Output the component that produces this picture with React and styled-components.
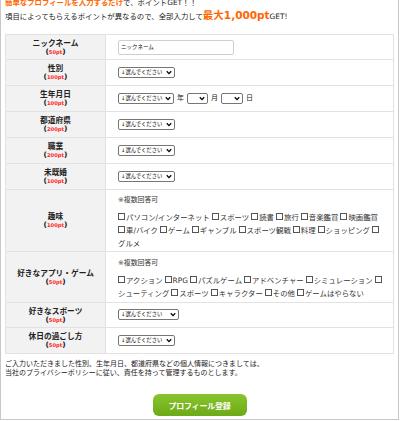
import React from 'react';
import styled, { createGlobalStyle } from 'styled-components';

const GlobalStyle = createGlobalStyle`
  html, body {
    margin: 0;
    padding: 0;
    background: #fff;
  }
  body {
    font-family: "DejaVu Sans", "Noto Sans CJK JP", sans-serif;
    color: #333;
  }
`;

const Frame = styled.div`
  box-sizing: border-box;
  width: 399px;
  height: 420px;
  padding: 0 4px;
  border: 1px solid #c8c8c8;
  border-top: none;
  overflow: hidden;
`;

const Lead = styled.p`
  margin: -4px 0 0;
  font-size: 7.4px;
  line-height: 13px;
  color: #222;
`;

const Accent = styled.span`
  color: #ff6600;
  font-weight: bold;
  font-size: ${props => (props.$big ? '10.5px' : 'inherit')};
`;

const Table = styled.table`
  width: 100%;
  margin-top: 11px;
  border-collapse: collapse;
  border: 1px solid #e2e2e2;
`;

const Row = styled.tr`
  height: ${props => props.$h}px;
`;

const Head = styled.th`
  width: 99px;
  padding: 0;
  background: #f2f2f2;
  border: 1px solid #e2e2e2;
  text-align: center;
  vertical-align: middle;
  color: #222;
`;

const Label = styled.div`
  font-size: 7.7px;
  line-height: 9px;
`;

const Points = styled.div`
  font-size: 7.4px;
  line-height: 8px;
`;

const PtNum = styled.span`
  color: #ff1a1a;
  font-size: 5.2px;
`;

const Cell = styled.td`
  padding: ${props => (props.$multi ? '3px 6px 1px 12px' : '0 6px 0 12px')};
  border: 1px solid #e2e2e2;
  vertical-align: middle;
  font-size: 7px;
  line-height: 13px;
  color: #222;
`;

const TextInput = styled.input`
  box-sizing: border-box;
  width: 116px;
  height: 15px;
  padding: 0 2px;
  border: 1px solid #cfcfcf;
  border-radius: 2px;
  font-family: "DejaVu Sans", "Noto Sans CJK JP", sans-serif;
  font-size: 5.5px;
  color: #111;
  vertical-align: middle;
`;

const SelectWrap = styled.span`
  position: relative;
  display: inline-block;
  vertical-align: middle;
  line-height: 0;
`;

const Select = styled.select`
  appearance: none;
  box-sizing: border-box;
  width: ${props => props.$w}px;
  height: 11px;
  margin: 0;
  padding: 0 0 0 2px;
  border: 1px solid #767676;
  border-radius: 2px;
  background: #fff;
  font-family: "DejaVu Sans", "Noto Sans CJK JP", sans-serif;
  font-size: 5.3px;
  line-height: 9px;
  color: #000;
`;

const Chevron = styled.svg`
  position: absolute;
  right: 3px;
  top: 3px;
  width: 6px;
  height: 5px;
  pointer-events: none;
`;

const Unit = styled.span`
  margin: 0 3px;
  font-size: 7px;
  vertical-align: middle;
`;

const Note = styled.div`
  margin-bottom: 4px;
  font-size: 6.9px;
  line-height: 13px;
  color: #333;
`;

const Choices = styled.div`
  font-size: 7.4px;
  line-height: 13px;
  color: #333;
`;

const CheckBox = styled.input.attrs({ type: 'checkbox' })`
  appearance: none;
  box-sizing: border-box;
  display: inline-block;
  width: 7px;
  height: 7px;
  margin: 0 1px 0 0;
  border: 1px solid #555;
  background: #fff;
  vertical-align: -0.5px;
`;

const Choice = styled.span`
  white-space: nowrap;
  margin-right: 2px;
`;

const Notice = styled.p`
  margin: 6px 0 0;
  font-size: 7px;
  line-height: 9px;
  color: #222;
`;

const Submit = styled.button`
  display: block;
  width: 94px;
  height: 22px;
  margin: 16px auto 0;
  padding: 0;
  border: none;
  border-radius: 6px;
  background: linear-gradient(#88c52c, #6da918);
  color: #fff;
  font-family: "Noto Sans CJK JP", sans-serif;
  font-size: 8px;
  font-weight: bold;
  letter-spacing: -0.2px;
`;

const Dropdown = ({ width = 57, text = '↓選んでください' }) => (
  <SelectWrap>
    <Select $w={width} defaultValue="">
      <option value="">{text}</option>
    </Select>
    <Chevron viewBox="0 0 6 5">
      <path d="M0.8 1.2 L3 3.6 L5.2 1.2" fill="none" stroke="#000" strokeWidth="1.3" />
    </Chevron>
  </SelectWrap>
);

const FieldRow = ({ label, pt, h, multi, children }) => (
  <Row $h={h}>
    <Head>
      <Label>{label}</Label>
      <Points>
        (<PtNum>{pt}</PtNum>)
      </Points>
    </Head>
    <Cell $multi={multi}>{children}</Cell>
  </Row>
);

const ChoiceList = ({ items }) => (
  <Choices>
    {items.map(item => (
      <React.Fragment key={item}>
        <CheckBox />
        <Choice>{item}</Choice>
      </React.Fragment>
    ))}
  </Choices>
);

const hobbies = [
  'パソコン/インターネット', 'スポーツ', '読書', '旅行', '音楽鑑賞', '映画鑑賞',
  '車/バイク', 'ゲーム', 'ギャンブル', 'スポーツ観戦', '料理', 'ショッピング', 'グルメ',
];

const apps = [
  'アクション', 'RPG', 'パズルゲーム', 'アドベンチャー', 'シミュレーション',
  'シューティング', 'スポーツ', 'キャラクター', 'その他', 'ゲームはやらない',
];

export default function App() {
  return (
    <>
      <GlobalStyle />
      <Frame>
        <Lead>
          <Accent>簡単なプロフィールを入力するだけ</Accent>で、ポイントGET！！
          <br />
          項目によってもらえるポイントが異なるので、全部入力して
          <Accent $big>最大1,000pt</Accent>GET!
        </Lead>

        <Table>
          <tbody>
            <FieldRow label="ニックネーム" pt="50pt" h={25}>
              <TextInput defaultValue="ニックネーム" />
            </FieldRow>
            <FieldRow label="性別" pt="100pt" h={26}>
              <Dropdown />
            </FieldRow>
            <FieldRow label="生年月日" pt="100pt" h={26}>
              <Dropdown width={56} />
              <Unit>年</Unit>
              <Dropdown width={21} text="" />
              <Unit>月</Unit>
              <Dropdown width={22} text="" />
              <Unit>日</Unit>
            </FieldRow>
            <FieldRow label="都道府県" pt="200pt" h={26}>
              <Dropdown />
            </FieldRow>
            <FieldRow label="職業" pt="200pt" h={26}>
              <Dropdown />
            </FieldRow>
            <FieldRow label="未既婚" pt="100pt" h={26}>
              <Dropdown />
            </FieldRow>
            <FieldRow label="趣味" pt="100pt" h={62} multi>
              <Note>※複数回答可</Note>
              <ChoiceList items={hobbies} />
            </FieldRow>
            <FieldRow label="好きなアプリ・ゲーム" pt="50pt" h={51} multi>
              <Note>※複数回答可</Note>
              <ChoiceList items={apps} />
            </FieldRow>
            <FieldRow label="好きなスポーツ" pt="50pt" h={25}>
              <Dropdown width={61} />
            </FieldRow>
            <FieldRow label="休日の過ごし方" pt="50pt" h={26}>
              <Dropdown />
            </FieldRow>
          </tbody>
        </Table>

        <Notice>
          ご入力いただきました性別、生年月日、都道府県などの個人情報につきましては、
          <br />
          当社のプライバシーポリシーに従い、責任を持って管理するものとします。
        </Notice>

        <Submit type="button">プロフィール登録</Submit>
      </Frame>
    </>
  );
}
